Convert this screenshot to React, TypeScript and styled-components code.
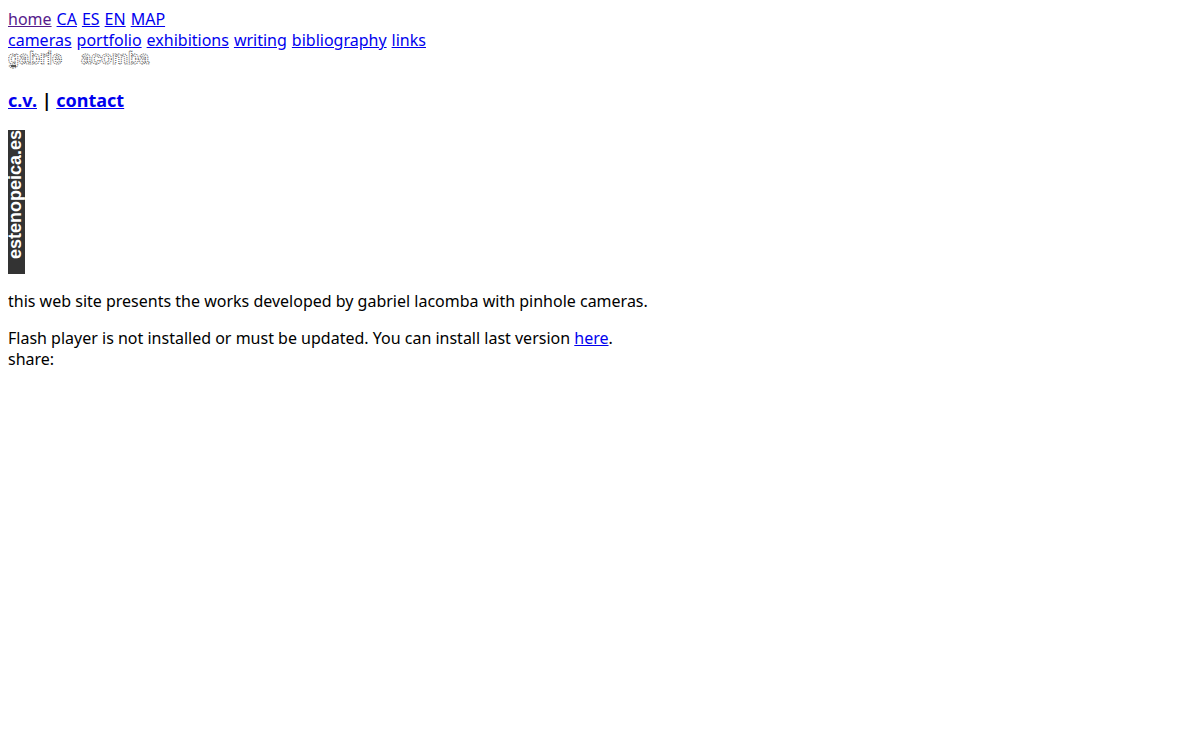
import React from "react";
import styled, { createGlobalStyle } from "styled-components";

const GlobalStyle = createGlobalStyle`
  body {
    margin: 9px 8px 8px;
    background: #fff;
    color: #000;
    font: 16px/21px "Noto Sans", "Open Sans", sans-serif;
  }
`;

const Nav = styled.nav`
  display: flex;
  flex-wrap: wrap;
  column-gap: 5px;
`;

const Link = styled.a<{ $visited?: boolean }>`
  color: ${(p) => (p.$visited ? "#551a8b" : "#0000ee")};
  text-decoration: underline;
`;

const Logo = styled.svg`
  display: block;
  overflow: visible;
  font: bold 18px "Liberation Sans", sans-serif;
`;

const LogoWord = styled.text`
  fill: #fff;
  stroke: #555;
  stroke-width: 1px;
  stroke-dasharray: 1 1;
`;

const Heading = styled.h3`
  margin: 19px 0 17px;
  font-size: 18px;
  line-height: 25px;
`;

const Banner = styled.svg`
  display: block;
  overflow: visible;
  font: bold 18px "Liberation Sans", sans-serif;
`;

const Paragraph = styled.p`
  margin: 17px 0 16px;
`;

const Notice = styled.div``;

const languages = ["CA", "ES", "EN", "MAP"];
const sections = ["cameras", "portfolio", "exhibitions", "writing", "bibliography", "links"];

export default function App() {
  return (
    <>
      <GlobalStyle />
      <header>
        <Nav aria-label="Languages">
          <Link href="#home" $visited>home</Link>
          {languages.map((name) => (
            <Link key={name} href={`#${name}`}>{name}</Link>
          ))}
        </Nav>
        <Nav aria-label="Sections">
          {sections.map((name) => (
            <Link key={name} href={`#${name}`}>{name}</Link>
          ))}
        </Nav>
        <Logo width="144" height="18" viewBox="0 0 144 18" role="img" aria-label="gabriel lacomba">
          <LogoWord x="0" y="13">gabrie</LogoWord>
          <LogoWord x="73" y="13">acomba</LogoWord>
          <rect x="3" y="14" width="5" height="2" fill="#555" />
        </Logo>
      </header>
      <main>
        <Heading>
          <Link href="#cv">c.v.</Link> | <Link href="#contact">contact</Link>
        </Heading>
        <Banner width="17" height="144" viewBox="0 0 17 144" role="img" aria-label="estenopeica.es">
          <rect width="17" height="144" fill="#333" />
          <text transform="translate(13 129) rotate(-90)" fill="#fff">estenopeica.es</text>
        </Banner>
        <Paragraph>
          this web site presents the works developed by gabriel lacomba with pinhole cameras.
        </Paragraph>
        <Notice>
          Flash player is not installed or must be updated. You can install last version{" "}
          <Link href="#flash">here</Link>.
        </Notice>
      </main>
      <footer>share:</footer>
    </>
  );
}
